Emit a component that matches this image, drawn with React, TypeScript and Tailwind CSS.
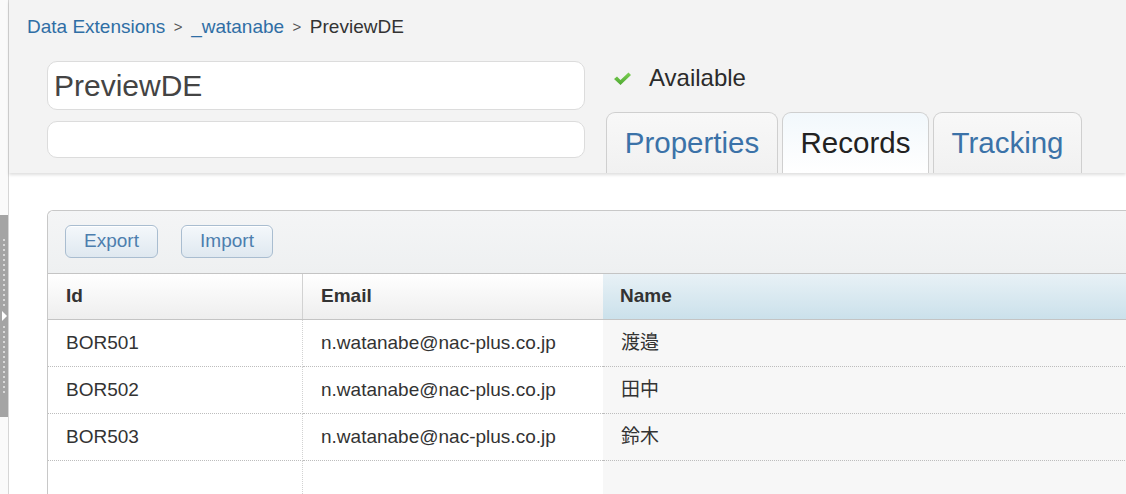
import type { ReactNode } from "react";

const font = "font-['Liberation_Sans','Noto_Sans_CJK_JP',Arial,sans-serif]";

const rows = [
  { id: "BOR501", email: "n.watanabe@nac-plus.co.jp", name: "渡邉" },
  { id: "BOR502", email: "n.watanabe@nac-plus.co.jp", name: "田中" },
  { id: "BOR503", email: "n.watanabe@nac-plus.co.jp", name: "鈴木" },
];

const btnCn =
  "h-[33px] rounded-[6px] border border-[#a9bdd0] bg-gradient-to-b from-[#f4f8fb] to-[#dfe8f0] text-[19px] text-[#4d7eae] shadow-[inset_0_1px_0_#fff]";

function CheckIcon() {
  return (
    <svg width="19" height="15" viewBox="0 0 19 15">
      <defs>
        <linearGradient id="chk" x1="0" y1="0" x2="0" y2="1">
          <stop offset="0" stopColor="#7ccf52" />
          <stop offset="1" stopColor="#4ea832" />
        </linearGradient>
      </defs>
      <path d="M1 8 L4 5.5 L7.5 9 L15.5 1.5 L18 4 L7.5 14 Z" fill="url(#chk)" />
    </svg>
  );
}

function Tab({ label, active, width }: { label: string; active?: boolean; width: string }) {
  return (
    <div
      className={`${width} flex h-[61px] items-center justify-center rounded-t-[9px] border border-b-0 border-[#cfcfcf] text-[29.5px] ${
        active
          ? "bg-gradient-to-b from-[#f2f8fc] to-white text-[#222]"
          : "bg-gradient-to-b from-[#f8f8f8] to-[#f1f1f1] text-[#3b72a8]"
      }`}
    >
      {label}
    </div>
  );
}

function Cell({ children, tone }: { children?: ReactNode; tone: "id" | "email" | "name" }) {
  const bg = tone === "name" ? "bg-[#f7f7f7]" : "bg-white";
  const edge = tone === "id" ? "border-r border-r-[#d2d2d2]" : "";
  return (
    <div className={`flex h-[47px] items-center border-b border-dotted border-b-[#bdbdbd] pl-[18px] text-[19px] text-[#333] ${bg} ${edge}`}>
      {children}
    </div>
  );
}

export default function App() {
  return (
    <div className={`flex h-[494px] w-[1126px] overflow-hidden bg-white ${font}`}>
      {/* collapsed side panel handle */}
      <aside className="flex w-[9px] shrink-0 flex-col border-r border-[#d6d6d6] bg-[#fafafa] pt-[215px]">
        <div className="flex h-[202px] w-[8px] flex-col items-center justify-center gap-[3px] bg-[#a4a4a4]">
          {Array.from({ length: 14 }).map((_, i) => (
            <span key={i} className="h-[2px] w-[2px] bg-[#d8d8d8]" />
          ))}
          <span className="my-[2px] h-0 w-0 border-y-[5px] border-l-[5px] border-y-transparent border-l-white" />
          {Array.from({ length: 14 }).map((_, i) => (
            <span key={`b${i}`} className="h-[2px] w-[2px] bg-[#d8d8d8]" />
          ))}
        </div>
      </aside>

      <main className="flex min-w-0 flex-1 flex-col">
        <header className="relative z-10 h-[173px] shrink-0 bg-[#f3f3f3] shadow-[0_2px_3px_rgba(0,0,0,0.13)]">
          <nav className="flex items-center gap-[8.5px] pl-[18px] pt-[16px] text-[19px] leading-[22px]">
            <span className="text-[#2f6ea5]">Data Extensions</span>
            <span className="text-[15px] text-[#555]">&gt;</span>
            <span className="text-[#2f6ea5]">_watanabe</span>
            <span className="text-[15px] text-[#555]">&gt;</span>
            <span className="text-[#333]">PreviewDE</span>
          </nav>

          <div className="mt-[23px] flex gap-[21px] pl-[38px]">
            <div className="flex w-[538px] flex-col gap-[11px]">
              <div className="flex h-[49px] items-center rounded-[10px] border border-[#dcdcdc] bg-white pl-[6px] text-[30px] text-[#444]">
                PreviewDE
              </div>
              <div className="h-[37px] rounded-[10px] border border-[#dcdcdc] bg-white" />
            </div>

            <div className="flex flex-col">
              <div className="flex h-[34px] items-center gap-[17px] pl-[7px]">
                <CheckIcon />
                <span className="text-[24px] text-[#2b2b2b]">Available</span>
              </div>
              <div className="mt-[17px] flex gap-[4px]">
                <Tab label="Properties" width="w-[172px]" />
                <Tab label="Records" width="w-[147px]" active />
                <Tab label="Tracking" width="w-[149px]" />
              </div>
            </div>
          </div>
        </header>

        <section className="pl-[38px] pt-[37px]">
          <div className="w-[1120px] rounded-tl-[6px] border-l border-t border-[#c8c8c8]">
            <div className="flex h-[62px] items-start gap-[23px] rounded-tl-[6px] bg-gradient-to-b from-[#f4f5f6] to-[#eef0f1] pl-[17px] pt-[14px]">
              <button className={`${btnCn} w-[93px]`}>Export</button>
              <button className={`${btnCn} w-[92px]`}>Import</button>
            </div>

            <div className="grid grid-cols-[255px_300px_1fr] border-y border-[#c4c4c4] text-[19px] font-bold text-[#333]">
              <div className="flex h-[45px] items-center border-r border-[#d2d2d2] bg-gradient-to-b from-white to-[#eeeeee] pl-[18px]">Id</div>
              <div className="flex h-[45px] items-center bg-gradient-to-b from-white to-[#eeeeee] pl-[18px]">Email</div>
              <div className="flex h-[45px] items-center bg-gradient-to-b from-[#e8f1f6] to-[#cbe1eb] pl-[17px]">Name</div>
            </div>

            <div className="grid grid-cols-[255px_300px_1fr]">
              {rows.map((r) => (
                <div key={r.id} className="contents">
                  <Cell tone="id">{r.id}</Cell>
                  <Cell tone="email">{r.email}</Cell>
                  <Cell tone="name">{r.name}</Cell>
                </div>
              ))}
              <Cell tone="id" />
              <Cell tone="email" />
              <Cell tone="name" />
            </div>
          </div>
        </section>
      </main>
    </div>
  );
}
